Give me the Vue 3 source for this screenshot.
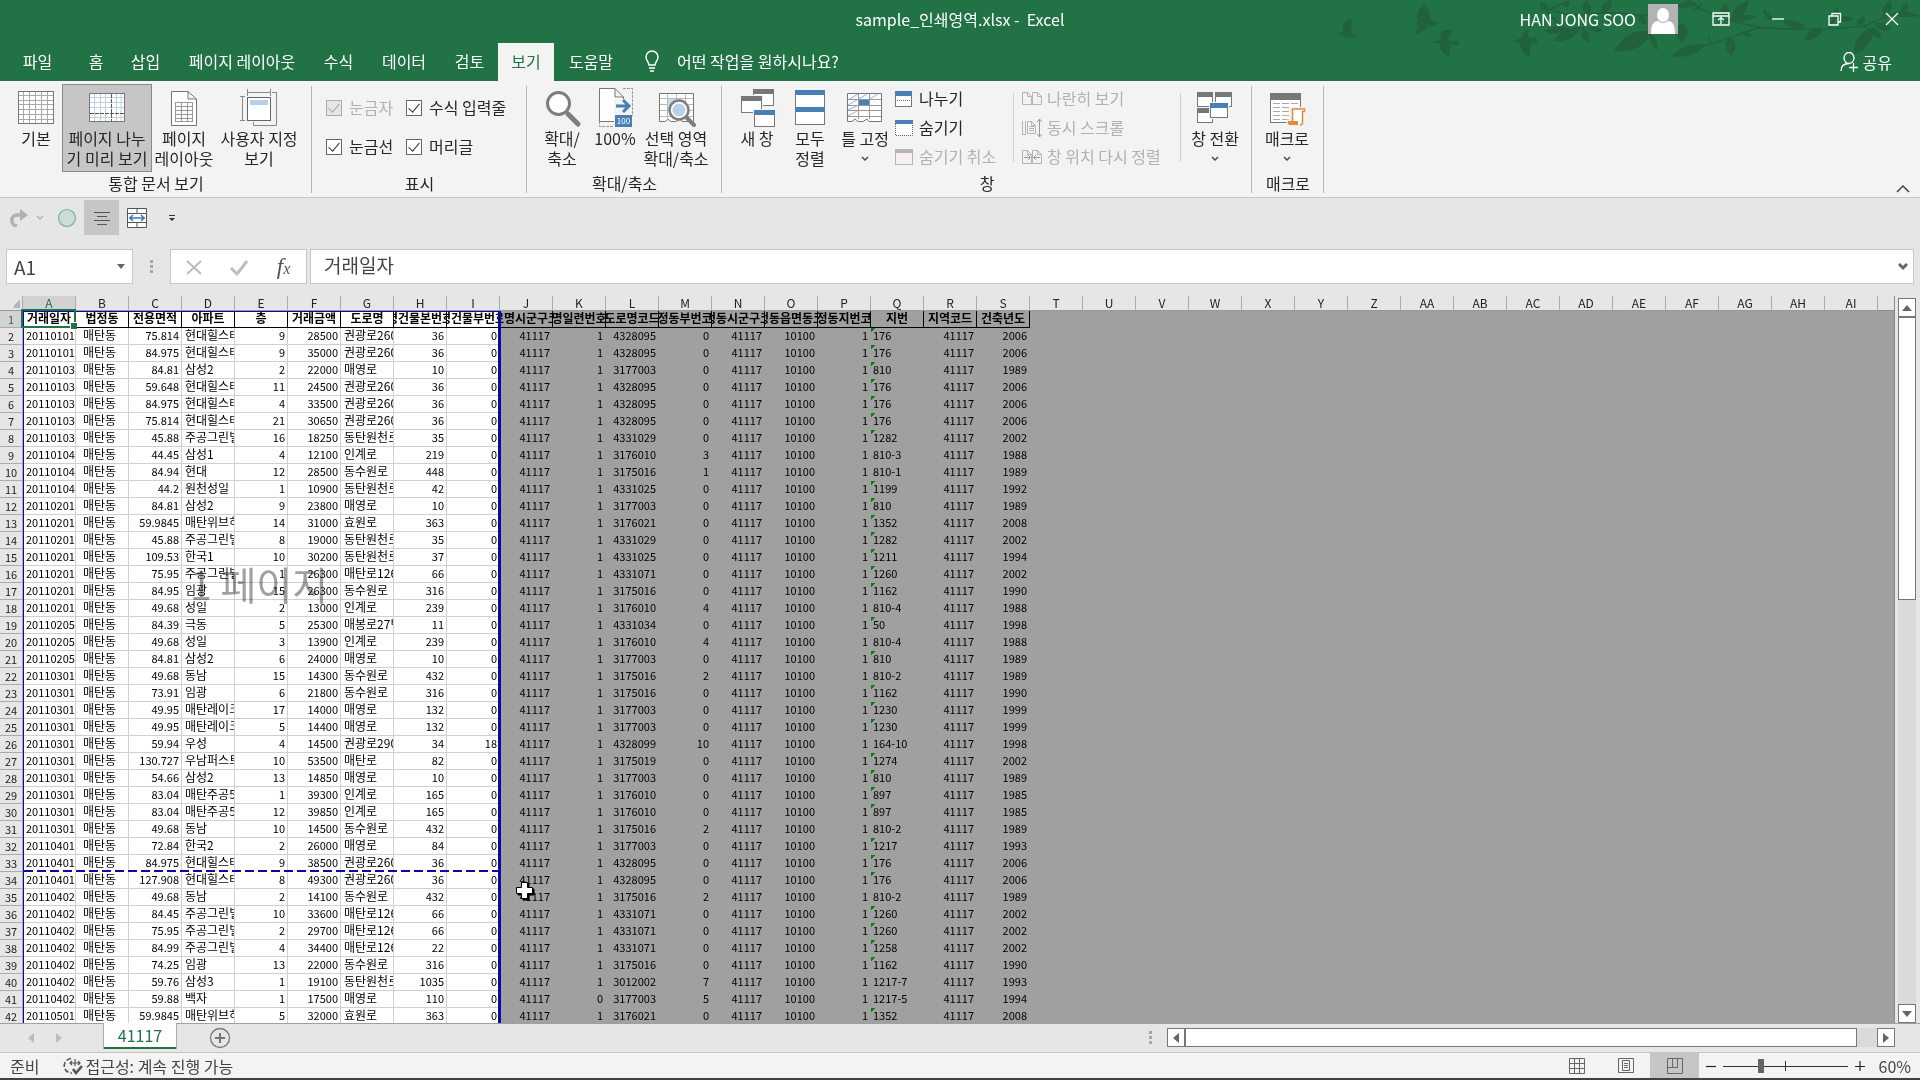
<template>
  <div class="excel">
    <header class="title">
      <svg class="title__art" viewBox="0 0 1568 270" preserveAspectRatio="none" aria-hidden="true">
        <g fill="#21623d">
          <path v-for="(bird, i) in birds" :key="`b${i}`" :d="bird" />
          <path v-for="(leaf, i) in leaves" :key="`l${i}`" :d="leafPath(leaf)" />
        </g>
        <g fill="none" stroke="#21623d" stroke-width="5">
          <path d="M575,30 C600,15 640,60 700,42 C780,30 830,52 880,45 M590,32 L640,88 L690,84 M600,28 L650,4" />
          <path d="M960,0 L1000,30 L1060,60 L1150,82 C1250,92 1350,88 1420,78 L1500,42 L1568,48" />
          <path d="M1150,82 C1090,100 1040,132 990,140 M1015,110 L1024,136 M975,36 L1000,10" />
          <path d="M1420,78 L1440,92 M1330,84 L1350,48 M1470,56 L1490,14" />
        </g>
      </svg>
      <div class="title__bar">
        <span class="title__name">sample_인쇄영역.xlsx&nbsp;-&nbsp;&nbsp;Excel</span>
        <div class="title__right">
          <span>HAN JONG SOO</span>
          <svg class="avatar" viewBox="0 0 30 30" aria-hidden="true">
            <rect width="30" height="30" fill="#b3b3b3" />
            <ellipse cx="15" cy="11" rx="6" ry="7" fill="#fff" />
            <path d="M3,30 C3,20 6,17 10,17 Q15,21 20,17 C24,17 27,20 27,30 Z" fill="#fff" />
          </svg>
          <button v-for="b in windowButtons" :key="b.label" type="button" class="title__btn" :aria-label="b.label">
            <svg viewBox="0 0 18 18" v-html="b.icon" />
          </button>
        </div>
      </div>
      <nav class="tabs">
        <div class="tabs__list">
          <button
            v-for="tab in tabs"
            :key="tab"
            type="button"
            class="tabs__tab"
            :class="{ 'is-active': tab === activeTab }"
            @click="activeTab = tab"
          >{{ tab }}</button>
        </div>
        <button type="button" class="tabs__tell">
          <svg viewBox="0 0 16 22" fill="none" stroke="#fff" stroke-width="1.5" aria-hidden="true">
            <path d="M5,15 C5,12 2,11 2,7 A6,6 0 0 1 14,7 C14,11 11,12 11,15 Z M5,18 H11 M6,21 H10" />
          </svg>
          <span>어떤 작업을 원하시나요?</span>
        </button>
        <button type="button" class="tabs__share">
          <svg viewBox="0 0 19 20" fill="none" stroke="#fff" stroke-width="1.3" aria-hidden="true">
            <ellipse cx="9" cy="6" rx="5" ry="5.5" />
            <path d="M1,19 C1,14 4,11.500 9,11.500 M9,15.500 H18 M13.500,11 V20" />
          </svg>
          <span>공유</span>
        </button>
      </nav>
    </header>

    <section class="ribbon" aria-label="보기">
      <div class="group group--views">
        <div class="group__body">
          <button v-for="b in viewButtons" :key="b.label" type="button" class="big" :class="[b.cls, { 'is-on': b.on }]">
            <svg viewBox="0 0 40 40" v-html="b.icon" />
            <span>{{ b.label }}</span>
          </button>
        </div>
        <div class="group__label">통합 문서 보기</div>
      </div>
      <div class="group group--show">
        <div class="group__body checks">
          <label v-for="c in checks" :key="c.label" class="check" :class="{ 'is-disabled': c.disabled }">
            <input type="checkbox" checked :disabled="c.disabled" />
            <span>{{ c.label }}</span>
          </label>
        </div>
        <div class="group__label">표시</div>
      </div>
      <div class="group group--zoom">
        <div class="group__body">
          <button v-for="b in zoomButtons" :key="b.label" type="button" class="big" :class="b.cls">
            <svg viewBox="0 0 40 40" v-html="b.icon" />
            <span>{{ b.label }}</span>
          </button>
        </div>
        <div class="group__label">확대/축소</div>
      </div>
      <div class="group group--window">
        <div class="group__body">
          <button v-for="b in windowTools" :key="b.label" type="button" class="big" :class="b.cls">
            <svg viewBox="0 0 40 40" v-html="b.icon" />
            <span>{{ b.label }}</span>
            <svg v-if="b.menu" class="big__arrow" viewBox="0 0 8 6"><path d="M1,1 L4,4 L7,1" fill="none" stroke="#444" stroke-width="1.4" /></svg>
          </button>
          <div class="stack stack--first">
            <button v-for="s in smallLeft" :key="s.label" type="button" class="small" :disabled="s.disabled">
              <svg viewBox="0 0 20 20" v-html="s.icon" />
              <span>{{ s.label }}</span>
            </button>
          </div>
          <div class="stack stack--second">
            <button v-for="s in smallRight" :key="s.label" type="button" class="small" disabled>
              <svg viewBox="0 0 20 20" v-html="s.icon" />
              <span>{{ s.label }}</span>
            </button>
          </div>
          <button type="button" class="big w-68">
            <svg viewBox="0 0 40 40" v-html="icons.switchWin" />
            <span>창 전환</span>
            <svg class="big__arrow" viewBox="0 0 8 6"><path d="M1,1 L4,4 L7,1" fill="none" stroke="#444" stroke-width="1.4" /></svg>
          </button>
        </div>
        <div class="group__label">창</div>
      </div>
      <div class="group group--macro">
        <div class="group__body">
          <button type="button" class="big w-70">
            <svg viewBox="0 0 40 40" v-html="icons.macro" />
            <span>매크로</span>
            <svg class="big__arrow" viewBox="0 0 8 6"><path d="M1,1 L4,4 L7,1" fill="none" stroke="#444" stroke-width="1.4" /></svg>
          </button>
        </div>
        <div class="group__label">매크로</div>
      </div>
      <button type="button" class="ribbon__collapse" aria-label="리본 메뉴 축소">
        <svg viewBox="0 0 14 8"><path d="M1,7 L7,1 L13,7" fill="none" stroke="#444" stroke-width="1.5" /></svg>
      </button>
    </section>

    <div class="quick">
      <button type="button" class="quick__redo" aria-label="다시 실행">
        <svg viewBox="0 0 20 18"><path d="M8,17 C1,16 1,6 8,6 H14" fill="none" stroke="#b1b1b1" stroke-width="3.500" /><path d="M11,0 L19,6 L11,12 Z" fill="#b1b1b1" /></svg>
      </button>
      <button type="button" class="quick__more" aria-label="다시 실행 목록">
        <svg viewBox="0 0 8 6"><path d="M1,1 L4,4 L7,1" fill="none" stroke="#b1b1b1" stroke-width="1.4" /></svg>
      </button>
      <button type="button" class="quick__btn" aria-label="타원">
        <svg viewBox="0 0 20 20"><circle cx="10" cy="10" r="8.500" fill="#cbded6" stroke="#7fae9a" stroke-width="1.2" /></svg>
      </button>
      <button type="button" class="quick__btn is-on" aria-label="가운데 맞춤">
        <svg viewBox="0 0 20 20"><path d="M2,4.500 H18 M5,8.500 H15 M2,12.500 H18 M5,16.500 H15" stroke="#555" /></svg>
      </button>
      <button type="button" class="quick__btn" aria-label="병합하고 가운데 맞춤">
        <svg viewBox="0 0 20 20">
          <path d="M0.500,0.500 H19.500 V19.500 H0.500 Z M0.500,5.500 H19.500 M0.500,14.500 H19.500 M10,0.500 V5.500 M10,14.500 V19.500" fill="#fff" stroke="#555" />
          <path d="M2,10 H18 M6,7 L3,10 L6,13 M14,7 L17,10 L14,13" fill="none" stroke="#3f7ab8" stroke-width="1.6" />
        </svg>
      </button>
      <button type="button" class="quick__btn" aria-label="빠른 실행 도구 모음 사용자 지정">
        <svg viewBox="0 0 20 20"><path d="M7,7.500 H13" stroke="#333" /><path d="M7,10 H13 L10,13 Z" fill="#333" /></svg>
      </button>
    </div>

    <div class="formula">
      <div class="formula__name">
        <input v-model="cellName" type="text" aria-label="이름 상자" />
        <svg viewBox="0 0 8 6" aria-hidden="true"><path d="M0,0 H8 L4,5 Z" fill="#666" /></svg>
      </div>
      <span class="dots" aria-hidden="true"></span>
      <div class="formula__tools">
        <button type="button" aria-label="취소"><svg viewBox="0 0 20 20"><path d="M3,4 L17,17 M17,4 L3,17" stroke="#bdbdbd" stroke-width="2" /></svg></button>
        <button type="button" aria-label="입력"><svg viewBox="0 0 20 20"><path d="M2,11 L8,17 L18,4" fill="none" stroke="#bdbdbd" stroke-width="3" /></svg></button>
        <button type="button" class="formula__fx" aria-label="함수 삽입"><span>f<sub>x</sub></span></button>
      </div>
      <div class="formula__text">
        <input v-model="cellValue" type="text" aria-label="수식 입력줄" />
        <svg viewBox="0 0 10 8" aria-hidden="true"><path d="M1,1 L5,5 L9,1" fill="none" stroke="#666" stroke-width="3" /></svg>
      </div>
    </div>

    <main class="work">
      <div class="sheet">
        <table class="grid">
          <colgroup>
            <col class="grid__rowcol" />
            <col v-for="c in columns" :key="c" class="grid__col" />
          </colgroup>
          <thead>
            <tr>
              <th class="corner" aria-label="모두 선택"></th>
              <th v-for="c in columns" :key="c" scope="col" :class="{ 'is-current': c === 'A' }">{{ c }}</th>
            </tr>
          </thead>
          <tbody>
            <tr class="fields">
              <th scope="row" class="is-current">1</th>
              <td v-for="(f, i) in fields" :key="f" :class="{ out: i > 8, 'is-selected': i === 0 }">
                <div><span>{{ f }}</span></div>
              </td>
            </tr>
            <tr v-for="(row, r) in rows" :key="r">
              <th scope="row">{{ r + 2 }}</th>
              <td v-for="(v, i) in row" :key="i" :class="cellClass(i, v)"><div>{{ v }}</div></td>
            </tr>
          </tbody>
        </table>
        <div class="area" aria-hidden="true"></div>
        <div class="break" aria-hidden="true"></div>
        <div class="mark">1 페이지</div>
        <svg class="cursor" viewBox="0 0 20 20" aria-hidden="true">
          <path d="M8,3 H14 V8 H19 V14 H14 V19 H8 V14 H3 V8 H8 Z" fill="#000" stroke="#000" />
          <path d="M6.500,1.500 H12.500 V6.500 H17.500 V12.500 H12.500 V17.500 H6.500 V12.500 H1.500 V6.500 H6.500 Z" fill="#fff" stroke="#000" />
        </svg>
      </div>
      <div class="vbar">
        <button type="button" aria-label="위로"><svg viewBox="0 0 10 8"><path d="M0,7 H10 L5,1 Z" fill="#666" /></svg></button>
        <div class="vbar__thumb"></div>
        <div class="vbar__track"></div>
        <button type="button" aria-label="아래로"><svg viewBox="0 0 10 8"><path d="M0,1 H10 L5,7 Z" fill="#666" /></svg></button>
      </div>
    </main>

    <div class="sheets">
      <div class="sheets__tabs">
        <button type="button" class="sheets__nav" aria-label="이전 시트"><svg viewBox="0 0 6 10"><path d="M6,0 V10 L0,5 Z" fill="#bcbcbc" /></svg></button>
        <button type="button" class="sheets__nav" aria-label="다음 시트"><svg viewBox="0 0 6 10"><path d="M0,0 V10 L6,5 Z" fill="#bcbcbc" /></svg></button>
        <button type="button" class="sheets__tab">41117</button>
        <button type="button" class="sheets__add" aria-label="새 시트">
          <svg viewBox="0 0 22 22" fill="none" stroke="#777"><circle cx="11" cy="11" r="9.500" stroke-width="1.3" /><path d="M6,11 H16 M11,6 V16" stroke-width="2" /></svg>
        </button>
      </div>
      <span class="dots" aria-hidden="true"></span>
      <div class="hbar">
        <button type="button" aria-label="왼쪽"><svg viewBox="0 0 8 10"><path d="M7,0 V10 L1,5 Z" fill="#666" /></svg></button>
        <div class="hbar__thumb"></div>
        <div class="hbar__track"></div>
        <button type="button" aria-label="오른쪽"><svg viewBox="0 0 8 10"><path d="M1,0 V10 L7,5 Z" fill="#666" /></svg></button>
      </div>
    </div>

    <footer class="status">
      <span class="status__ready">준비</span>
      <button type="button" class="status__access">
        <svg viewBox="0 0 20 18" fill="none" stroke="#555">
          <path d="M8,1.500 A7,7 0 1 0 9,16" stroke-width="1.6" stroke-dasharray="5 2" />
          <path d="M7,6 H17 M9,4 L7,6 L9,8 M15,4 L17,6 L15,8 M12,2 V9" stroke-width="1.2" />
          <path d="M10,12 L13,16 L19,9" stroke-width="2.600" />
        </svg>
        <span>접근성: 계속 진행 가능</span>
      </button>
      <div class="status__right">
        <button v-for="m in modes" :key="m.label" type="button" class="status__mode" :class="{ 'is-on': m.on }" :aria-label="m.label">
          <svg viewBox="0 0 18 18" fill="none" stroke="#666" v-html="m.icon" />
        </button>
        <button type="button" class="status__step" aria-label="축소">
          <svg viewBox="0 0 10 10"><path d="M0,5.500 H10" stroke="#222" stroke-width="1.2" /></svg>
        </button>
        <input v-model="zoom" type="range" min="0" max="100" aria-label="확대/축소" />
        <button type="button" class="status__step" aria-label="확대">
          <svg viewBox="0 0 10 10"><path d="M0,5.500 H10 M5,0 V10" stroke="#222" stroke-width="1.2" /></svg>
        </button>
        <span class="status__zoom">60%</span>
      </div>
    </footer>
  </div>
</template>

<script setup>
import { ref } from 'vue'

const activeTab = ref('보기')
const cellName = ref('A1')
const cellValue = ref('거래일자')
const zoom = ref(29)

const tabs = ['파일', '홈', '삽입', '페이지 레이아웃', '수식', '데이터', '검토', '보기', '도움말']

const line = (d, stroke = '#777', extra = '') => `<path d="${d}" fill="none" stroke="${stroke}" ${extra}/>`
const box = (x, y, w, h, stroke = '#777', fill = '#fff') =>
  `<rect x="${x + 0.5}" y="${y + 0.5}" width="${w - 1}" height="${h - 1}" fill="${fill}" stroke="${stroke}"/>`
const bar = (x, y, w, h, fill) => `<rect x="${x}" y="${y}" width="${w}" height="${h}" fill="${fill}"/>`
const win = (x, y, w, h, color, edge = '#777') => box(x, y, w, h, edge) + bar(x, y, w, 5, color)
const halo = (x, y, w, h) => bar(x - 1, y - 1, w + 2, h + 2, '#f3f3f3')
const page = (x, y, w, h, stroke) =>
  `<path d="M${x + 0.5},${y + 0.5} h${w - 5} l4,4 v${h - 5} h-${w - 1} Z M${x + w - 4.5},${y + 0.5} v4 h4" fill="#f6eff6" stroke="${stroke}"/>`

const BLUE = '#4a7fb5'
const DIM = '#b5b5b5'

const icons = {
  normal: box(2, 3, 36, 33, '#777') +
    line('M7.500,4 V35 M13.500,4 V35 M19.500,4 V35 M25.500,4 V35 M31.500,4 V35 M3,7.500 H37 M3,12.500 H37 M3,16.500 H37 M3,21.500 H37 M3,26.500 H37 M3,31.500 H37', '#aaa'),
  pageBreak: box(2, 5, 36, 29, '#777') +
    line('M7.500,6 V33 M13.500,6 V33 M18.500,6 V33 M29.500,6 V33 M34,6 V33 M3,9.500 H37 M3,14.500 H37 M3,19.500 H37 M3,29.500 H37', '#bcd0e2') +
    line('M24.500,6 V33 M3,25.500 H37', '#555', 'stroke-dasharray="4 1"'),
  pageLayout: '<path d="M7.500,3.500 H24 L32.500,11 V37.500 H7.500 Z M24,3.500 V11 H32.500" fill="#fff" stroke="#777"/>' +
    box(11, 14, 18, 20, '#999') + line('M17.500,14 V33 M23.500,14 V33 M11,18.500 H29 M11,22.500 H29 M11,26.500 H29 M11,30.500 H29', '#999'),
  custom: line('M37.500,4.500 H33 M37.500,4 V37.500 H14.500 V34', '#888') + line('M8,4.500 H31 M8.500,1 V8 M31.500,1 V8 M3.500,9 V32 M1,8.500 H6 M1,32.500 H6', '#888') +
    box(8, 9, 24, 24, '#666') + bar(11, 12, 18, 5, '#b9cfe6'),
  glass: '<path d="M26,26 L36,36" stroke="#7d7d7d" stroke-width="5" stroke-linecap="round"/><circle cx="16.500" cy="15.500" r="11" fill="#fff" stroke="#7d7d7d" stroke-width="3"/>',
  hundred: line('M28,0.500 H37.500 V28 M4.500,33 V38.500 H20', '#999', 'stroke-dasharray="3 1"') +
    '<path d="M4.500,0.500 H20 L28.500,9 V33.500 H4.500 Z M20,0.500 V9 H28.500" fill="#fff" stroke="#777"/>' +
    bar(19, 11, 18, 28, '#f3f3f3') + '<path d="M21,18 H34 M28,12 L34,18 L28,24" fill="none" stroke="#4a7fb5" stroke-width="3"/>' +
    bar(20, 27, 17, 12, BLUE) + '<text x="28.500" y="36" font-size="8" fill="#fff" text-anchor="middle">100</text>',
  zoomSel: '<path d="M3.500,5.500 H37.500 V33.500 H26 L24,31 L20,33.500 H15 L12,31 L9,33.500 H3.500 Z" fill="#fff" stroke="#777"/>' +
    line('M11.500,6 V33 M20.500,6 V30 M29.500,6 V30 M4,10.500 H37 M4,16.500 H37 M4,22.500 H37 M4,28.500 H37', '#bbb') + bar(12, 11, 13, 10, '#c7daee') +
    '<path d="M31,30 L38,37" stroke="#7d7d7d" stroke-width="4" stroke-linecap="round"/><circle cx="23" cy="22" r="9.500" fill="#fff" stroke="#7d7d7d" stroke-width="2.500"/><circle cx="23" cy="22" r="6.500" fill="#b9d0e8"/>',
  newWin: win(16, 1, 21, 17, '#777') + halo(4, 8, 21, 17) + win(4, 8, 21, 17, '#777') + halo(17, 22, 21, 17) + win(17, 22, 21, 17, BLUE),
  arrange: win(5, 2, 30, 18, BLUE) + win(5, 19, 30, 18, BLUE),
  freeze: '<path d="M2.500,5.500 H36.500 V33.500 H24 L22,31 L18,33.500 H13 L10,31 L7,33.500 H2.500 Z" fill="#fff" stroke="#777"/>' +
    line('M13.500,6 V31 M24.500,6 V31 M3,11.500 H36 M3,17.500 H36 M3,22.500 H36 M3,28.500 H36', '#999') + bar(14, 12, 10, 5, BLUE) +
    line('M3,12 L13,6 M14,11 L22,6 M25,11 L33,6 M3,17 L12,12 M3,22 L12,18 M3,28 L12,23', '#8fb2d8'),
  switchWin: win(2, 4, 16, 15, '#777') + win(20, 4, 17, 15, '#777') + win(2, 20, 16, 15, '#777') + halo(15, 15, 18, 15) + win(15, 15, 18, 15, BLUE),
  macro: box(3, 5, 31, 30, '#777') + bar(3, 5, 31, 7, '#777') +
    line('M6,15.500 H31 M6,19.500 H31 M6,23.500 H31 M6,27.500 H31 M6,31.500 H31', '#aaa', 'stroke-dasharray="7 2"') +
    '<path d="M24,20.500 H38 V24 H36 V34 Q36,37 33,37 H23 Q20,37 21,33 H24 Z" fill="#fff" stroke="#f3f3f3" stroke-width="3"/>' +
    '<path d="M25.500,33 V21 H37.500 V23.500 H35.500 V34 Q35.500,37 33,37" fill="#fff" stroke="#e08a3c" stroke-width="1.500"/><path d="M21,33 H31 V37 H23 Q20,37 21,33" fill="#e08a3c"/>',
}

const windowButtons = [
  { label: '리본 메뉴 표시 옵션', icon: '<path d="M1,3 H17 V15 H1 Z M1,6 H17 M9,14 V8 M6,10 L9,7.500 L12,10" fill="none" stroke="#fff" stroke-width="1.300"/>' },
  { label: '최소화', icon: '<path d="M3,9 H15" stroke="#fff" stroke-width="1.300"/>' },
  { label: '이전 크기로 복원', icon: '<path d="M3,6 H12 V15 H3 Z M6,6 V3.500 H14.500 V12 H12" fill="none" stroke="#fff" stroke-width="1.300"/>' },
  { label: '닫기', icon: '<path d="M3,3 L15,15 M15,3 L3,15" stroke="#fff" stroke-width="1.300"/>' },
]

const viewButtons = [
  { label: '기본', cls: 'w-52', icon: icons.normal },
  { label: '페이지 나누\n기 미리 보기', cls: 'w-90', icon: icons.pageBreak, on: true },
  { label: '페이지\n레이아웃', cls: 'w-64', icon: icons.pageLayout },
  { label: '사용자 지정\n보기', cls: 'w-86', icon: icons.custom },
]

const checks = [
  { label: '눈금자', disabled: true },
  { label: '수식 입력줄' },
  { label: '눈금선' },
  { label: '머리글' },
]

const zoomButtons = [
  { label: '확대/\n축소', cls: 'w-64', icon: icons.glass },
  { label: '100%', cls: 'w-42', icon: icons.hundred },
  { label: '선택 영역\n확대/축소', cls: 'w-80', icon: icons.zoomSel },
]

const windowTools = [
  { label: '새 창', cls: 'w-54', icon: icons.newWin },
  { label: '모두\n정렬', cls: 'w-52', icon: icons.arrange },
  { label: '틀 고정', cls: 'w-58', icon: icons.freeze, menu: true },
]

const smallLeft = [
  { label: '나누기', icon: box(1, 2, 17, 16) + bar(1, 2, 17, 5, BLUE) + line('M3,11.500 H17', BLUE, 'stroke-dasharray="1 1"') },
  { label: '숨기기', icon: bar(1, 2, 17, 15, '#fff') + bar(1, 2, 18, 4, BLUE) + line('M1.500,6 V17.500 H18.500 V6', '#666', 'stroke-dasharray="1 1"') },
  { label: '숨기기 취소', icon: box(1, 2, 18, 16, DIM, '#f6eff6') + bar(1, 2, 18, 4, DIM), disabled: true },
]

const smallRight = [
  { label: '나란히 보기', icon: page(0, 3, 10, 13, DIM) + page(10, 3, 10, 13, DIM) },
  { label: '동시 스크롤', icon: line('M0.500,3 V16.500 H4 M3.500,3 V16', DIM) + page(5, 3, 9, 13, DIM) + line('M7,8.500 H12 M7,10.500 H12 M7,12.500 H12', DIM) + line('M17.500,1 V19 M15,4 L17.500,1 L20,4 M15,16 L17.500,19 L20,16', '#999') },
  { label: '창 위치 다시 정렬', icon: page(0, 3, 10, 14, DIM) + page(10, 3, 10, 14, DIM) + line('M2,10.500 H8 M6,8 L8.500,10.500 L6,13 M18,10.500 H12 M14,8 L11.500,10.500 L14,13', '#999') },
]

const modes = [
  { label: '기본', icon: '<path d="M1.500,1.500 H16.500 V16.500 H1.500 Z M6.500,1.500 V16.500 M11.500,1.500 V16.500 M1.500,6.500 H16.500 M1.500,11.500 H16.500"/>' },
  { label: '페이지 레이아웃', icon: '<path d="M1.500,1.500 H16.500 V15.500 H1.500 Z M5.500,3.500 H12.500 V13.500 H5.500 Z M7,6.500 H11 M7,8.500 H11 M7,10.500 H11"/>' },
  { label: '페이지 나누기 미리 보기', icon: '<path d="M1.500,1.500 H16.500 V16.500 H1.500 Z M6.500,1.500 V10.500 M11.500,1.500 V10.500 H1.500"/>', on: true },
]

const birds = [
  'M83,52 C60,62 55,82 62,98 L44,98 L62,108 L68,117 L78,110 L97,114 L95,106 L82,100 Z',
  'M272,12 C252,30 250,55 258,64 C244,66 246,74 258,76 L248,100 C262,102 276,92 282,78 L302,76 L313,68 L298,62 L288,58 C290,40 284,20 272,12 Z',
  'M348,90 C318,86 306,98 318,114 L296,128 L314,130 C310,148 322,164 340,170 C336,156 338,146 346,136 L362,136 L362,122 L340,124 L336,110 Z',
  'M545,90 C530,92 526,100 530,112 L506,122 L524,130 C522,150 534,166 546,170 C552,156 548,140 552,130 L568,132 L566,112 L548,114 L543,102 Z',
]

// base x, base y, tip x, tip y, width
const leaves = [
  [865, 95, 768, 154, 44], [862, 98, 882, 152, 16], [945, 68, 945, 128, 32], [1004, 136, 918, 169, 30],
  [1070, 108, 1076, 170, 26], [1100, 96, 1130, 108, 12], [1055, 56, 1060, 8, 22], [1075, 62, 1120, 0, 26],
  [1072, 60, 1142, 48, 18], [1180, 60, 1158, 28, 14], [1270, 82, 1206, 62, 22], [1312, 84, 1265, 122, 26],
  [1345, 58, 1352, 24, 20], [1350, 58, 1396, 56, 16], [1442, 84, 1396, 164, 34], [1440, 80, 1466, 118, 18],
  [1450, 72, 1496, 88, 22], [1474, 46, 1492, 0, 20], [1500, 40, 1558, 46, 18], [1404, 80, 1424, 46, 18],
  [596, 30, 574, 6, 16], [640, 24, 652, 0, 14], [700, 42, 694, 0, 22], [736, 38, 762, 0, 22],
  [646, 88, 584, 94, 22], [676, 88, 610, 124, 28], [688, 86, 700, 128, 20], [836, 44, 850, 76, 18],
  [985, 10, 926, 18, 18], [700, 84, 742, 92, 14], [1520, 42, 1536, 8, 16],
]

function leafPath([x1, y1, x2, y2, w]) {
  const len = Math.hypot(x2 - x1, y2 - y1)
  const nx = (-(y2 - y1) / len) * w
  const ny = ((x2 - x1) / len) * w
  const mx = x1 + (x2 - x1) * 0.4
  const my = y1 + (y2 - y1) * 0.4
  return `M${x1},${y1} Q${mx + nx},${my + ny} ${x2},${y2} Q${mx - nx},${my - ny} ${x1},${y1} Z`
}

const letters = [...'ABCDEFGHIJKLMNOPQRSTUVWXYZ']
const columns = [...letters, ...letters.slice(0, 9).map((c) => `A${c}`)]

const fields = [
  '거래일자', '법정동', '전용면적', '아파트', '층', '거래금액', '도로명', '도로명건물본번호코드', '도로명건물부번호코드',
  '도로명시군구코드', '도로명일련번호코드', '도로명코드', '법정동부번코드', '법정동시군구코드', '법정동읍면동코드',
  '법정동지번코드', '지번', '지역코드', '건축년도',
]

// date, area, apartment, floor, price, road, main no., sub no., serial, road code, sub lot, lot, year
const deals = `
20110101|75.814|현대힐스테이트|9|28500|권광로260번길|36|0|1|4328095|0|176|2006
20110101|84.975|현대힐스테이트|9|35000|권광로260번길|36|0|1|4328095|0|176|2006
20110103|84.81|삼성2|2|22000|매영로|10|0|1|3177003|0|810|1989
20110103|59.648|현대힐스테이트|11|24500|권광로260번길|36|0|1|4328095|0|176|2006
20110103|84.975|현대힐스테이트|4|33500|권광로260번길|36|0|1|4328095|0|176|2006
20110103|75.814|현대힐스테이트|21|30650|권광로260번길|36|0|1|4328095|0|176|2006
20110103|45.88|주공그린빌|16|18250|동탄원천로|35|0|1|4331029|0|1282|2002
20110104|44.45|삼성1|4|12100|인계로|219|0|1|3176010|3|810-3|1988
20110104|84.94|현대|12|28500|동수원로|448|0|1|3175016|1|810-1|1989
20110104|44.2|원천성일|1|10900|동탄원천로|42|0|1|4331025|0|1199|1992
20110201|84.81|삼성2|9|23800|매영로|10|0|1|3177003|0|810|1989
20110201|59.9845|매탄위브하늘채|14|31000|효원로|363|0|1|3176021|0|1352|2008
20110201|45.88|주공그린빌|8|19000|동탄원천로|35|0|1|4331029|0|1282|2002
20110201|109.53|한국1|10|30200|동탄원천로|37|0|1|4331025|0|1211|1994
20110201|75.95|주공그린빌|1|26300|매탄로126번길|66|0|1|4331071|0|1260|2002
20110201|84.95|임광|15|26300|동수원로|316|0|1|3175016|0|1162|1990
20110201|49.68|성일|2|13000|인계로|239|0|1|3176010|4|810-4|1988
20110205|84.39|극동|5|25300|매봉로27번길|11|0|1|4331034|0|50|1998
20110205|49.68|성일|3|13900|인계로|239|0|1|3176010|4|810-4|1988
20110205|84.81|삼성2|6|24000|매영로|10|0|1|3177003|0|810|1989
20110301|49.68|동남|15|14300|동수원로|432|0|1|3175016|2|810-2|1989
20110301|73.91|임광|6|21800|동수원로|316|0|1|3175016|0|1162|1990
20110301|49.95|매탄레이크|17|14000|매영로|132|0|1|3177003|0|1230|1999
20110301|49.95|매탄레이크|5|14400|매영로|132|0|1|3177003|0|1230|1999
20110301|59.94|우성|4|14500|권광로290번길|34|18|1|4328099|10|164-10|1998
20110301|130.727|우남퍼스트빌|10|53500|매탄로|82|0|1|3175019|0|1274|2002
20110301|54.66|삼성2|13|14850|매영로|10|0|1|3177003|0|810|1989
20110301|83.04|매탄주공5|1|39300|인계로|165|0|1|3176010|0|897|1985
20110301|83.04|매탄주공5|12|39850|인계로|165|0|1|3176010|0|897|1985
20110301|49.68|동남|10|14500|동수원로|432|0|1|3175016|2|810-2|1989
20110401|72.84|한국2|2|26000|매영로|84|0|1|3177003|0|1217|1993
20110401|84.975|현대힐스테이트|9|38500|권광로260번길|36|0|1|4328095|0|176|2006
20110401|127.908|현대힐스테이트|8|49300|권광로260번길|36|0|1|4328095|0|176|2006
20110402|49.68|동남|2|14100|동수원로|432|0|1|3175016|2|810-2|1989
20110402|84.45|주공그린빌|10|33600|매탄로126번길|66|0|1|4331071|0|1260|2002
20110402|75.95|주공그린빌|2|29700|매탄로126번길|66|0|1|4331071|0|1260|2002
20110402|84.99|주공그린빌|4|34400|매탄로126번길|22|0|1|4331071|0|1258|2002
20110402|74.25|임광|13|22000|동수원로|316|0|1|3175016|0|1162|1990
20110402|59.76|삼성3|1|19100|동탄원천로|1035|0|1|3012002|7|1217-7|1993
20110402|59.88|백자|1|17500|매영로|110|0|0|3177003|5|1217-5|1994
20110501|59.9845|매탄위브하늘채|5|32000|효원로|363|0|1|3176021|0|1352|2008`

const rows = deals.trim().split('\n').map((text) => {
  const [date, area, apt, floor, price, road, main, sub, serial, code, subLot, lot, year] = text.split('|')
  return [
    date, '매탄동', area, apt, floor, price, road, main, sub, '41117', serial, code, subLot, '41117', '10100', '1', lot, '41117', year,
  ]
})

function cellClass(i, v) {
  return {
    out: i > 8,
    ko: i === 1 || i === 3 || i === 6,
    dong: i === 1,
    lot: i === 16,
    'is-flagged': i === 16 && !v.includes('-'),
  }
}
</script>

<style>
body {
  margin: 0;
}
</style>

<style scoped>
.excel {
  display: flex;
  flex-direction: column;
  height: 100vh;
  overflow: hidden;
  background: #e6e6e6;
  color: #262626;
  font-family: "Noto Sans CJK KR", "Noto Sans", sans-serif;
  font-size: 16px;
  line-height: 20px;
}

.excel * {
  box-sizing: border-box;
}

button {
  margin: 0;
  padding: 0;
  border: none;
  background: none;
  color: inherit;
  font: inherit;
}

svg {
  display: block;
  flex: none;
}

/* title and tabs */
.title {
  position: relative;
  flex: none;
  background: #217346;
  color: #fff;
}

.title__art {
  position: absolute;
  top: 0;
  right: 0;
  width: 600px;
  height: 90px;
  clip-path: inset(0 0 9px 0);
}

.title__bar {
  position: relative;
  display: grid;
  grid-template-columns: 1fr auto 1fr;
  align-items: center;
  height: 38px;
}

.title__name {
  grid-column: 2;
}

.title__right {
  display: flex;
  align-items: center;
  justify-content: flex-end;
}

.avatar {
  width: 30px;
  height: 30px;
  margin: 0 14px 0 12px;
}

.title__btn {
  display: grid;
  place-items: center;
  width: 57px;
  height: 38px;
}

.title__btn svg {
  width: 18px;
  height: 18px;
}

.tabs {
  position: relative;
  display: flex;
  align-items: center;
  height: 43px;
  padding-top: 5px;
}

.tabs__list {
  display: grid;
  grid-template-columns: 75px 42px 57px 136px 57px 74px 57px 56px 74px;
  height: 38px;
}

.tabs__tab {
  padding-bottom: 3px;
}

.tabs__tab.is-active {
  background: #f3f3f3;
  color: #217346;
}

.tabs__tell,
.tabs__share {
  display: flex;
  align-items: center;
  padding-bottom: 2px;
}

.tabs__tell {
  gap: 17px;
  margin-left: 16px;
}

.tabs__tell svg {
  width: 16px;
  height: 22px;
}

.tabs__share {
  gap: 4px;
  margin-left: auto;
  padding-right: 28px;
  padding-bottom: 0;
}

.tabs__share svg {
  width: 19px;
  height: 20px;
}

/* ribbon */
.ribbon {
  position: relative;
  display: flex;
  flex: none;
  height: 117px;
  padding: 3px 0 4px;
  border-bottom: 1px solid #c8c8c8;
  background: #f3f3f3;
}

.group {
  position: relative;
  display: flex;
  flex-direction: column;
}

.group::after {
  content: "";
  position: absolute;
  top: 2px;
  right: 0;
  bottom: 0;
  width: 1px;
  background: #b5b5b5;
}

.group--views {
  width: 312px;
}

.group--views .group__body {
  padding-left: 10px;
}

.group--show {
  width: 215px;
}

.group--zoom {
  width: 195px;
}

.group--zoom .group__body {
  padding-left: 3px;
}

.group--window {
  width: 530px;
}

.group--window .group__body {
  padding-left: 8px;
}

.group--macro {
  width: 72px;
}

.group__body {
  display: flex;
  align-items: flex-start;
  height: 92px;
}

.group__label {
  text-align: center;
}

.big {
  display: flex;
  flex-direction: column;
  align-items: center;
  height: 88px;
  padding-top: 3px;
  border: 1px solid transparent;
  white-space: pre;
}

.big > svg {
  width: 40px;
  height: 40px;
}

.big > .big__arrow {
  width: 8px;
  height: 6px;
  margin-top: 8px;
}

.big.is-on {
  border-color: #8a8a8a;
  background: #c6c6c6;
}

.w-42 {
  width: 42px;
}

.w-52 {
  width: 52px;
}

.w-54 {
  width: 54px;
}

.w-58 {
  width: 58px;
}

.w-64 {
  width: 64px;
}

.w-68 {
  width: 68px;
}

.w-70 {
  width: 70px;
}

.w-80 {
  width: 80px;
}

.w-86 {
  width: 86px;
}

.w-90 {
  width: 90px;
}

.checks {
  display: grid;
  grid-template-columns: 80px 1fr;
  grid-template-rows: 39px 39px;
  padding: 4px 0 0 14px;
}

.check {
  display: flex;
  align-items: center;
  gap: 7px;
  height: 39px;
  white-space: nowrap;
}

.check span,
.small span {
  padding-bottom: 2px;
}

.check input {
  display: grid;
  place-items: center;
  width: 16px;
  height: 16px;
  margin: 0;
  border: 1px solid #666;
  background: #fff;
  appearance: none;
}

.check input:checked::after {
  content: "";
  width: 5px;
  height: 10px;
  margin-bottom: 3px;
  border: solid #333;
  border-width: 0 1px 1px 0;
  transform: rotate(40deg);
}

.check.is-disabled {
  color: #b1b1b1;
}

.check.is-disabled input {
  border-color: #ababab;
  background: #e6e6e6;
}

.check.is-disabled input::after {
  border-color: #a6a6a6;
}

.stack {
  display: flex;
  flex-direction: column;
  height: 87px;
}

.stack--first {
  width: 119px;
}

.stack--second {
  position: relative;
  width: 168px;
}

.stack--second::before,
.stack--second::after {
  content: "";
  position: absolute;
  top: 9px;
  bottom: 9px;
  left: 0;
  width: 1px;
  background: #d0d0d0;
}

.stack--second::after {
  right: 0;
  left: auto;
}

.stack--second .small {
  padding-left: 9px;
}

.small {
  display: flex;
  align-items: center;
  gap: 5px;
  height: 29px;
  white-space: nowrap;
}

.small svg {
  width: 20px;
  height: 20px;
}

.small:disabled {
  color: #b1b1b1;
}

.ribbon__collapse {
  align-self: flex-end;
  margin: 0 10px 0 auto;
}

.ribbon__collapse svg {
  width: 14px;
  height: 8px;
}

/* quick access */
.quick {
  display: flex;
  align-items: center;
  flex: none;
  height: 51px;
  padding: 0 0 12px 9px;
}

.quick__redo svg {
  width: 20px;
  height: 18px;
}

.quick__more {
  margin: 0 5px 0 7px;
}

.quick__more svg {
  width: 8px;
  height: 6px;
}

.quick__btn {
  display: grid;
  place-items: center;
  width: 35px;
  height: 35px;
}

.quick__btn.is-on {
  background: #c6c6c6;
}

.quick__btn svg {
  width: 20px;
  height: 20px;
}

/* formula bar */
.formula {
  display: flex;
  flex: none;
  height: 35px;
  margin: 0 6px 12px;
}

.formula input {
  flex: 1;
  min-width: 0;
  padding: 0;
  border: none;
  outline: none;
  background: none;
  color: #444;
  font: inherit;
  font-size: 19px;
}

.formula__name,
.formula__tools,
.formula__text {
  display: flex;
  align-items: center;
  border: 1px solid #c6c6c6;
  background: #fff;
}

.formula__name {
  width: 127px;
  padding: 0 7px;
}

.formula__name svg {
  width: 8px;
  height: 6px;
}

.formula .dots {
  margin: 0 17px;
}

.dots {
  align-self: center;
  width: 3px;
  height: 13px;
  background: repeating-linear-gradient(#a6a6a6 0 3px, transparent 3px 5px);
}

.formula__tools {
  width: 137px;
  margin-right: 3px;
}

.formula__tools button {
  display: grid;
  place-items: center;
  width: 45px;
}

.formula__tools svg {
  width: 20px;
  height: 20px;
}

.formula .formula__fx {
  color: #555;
  font-family: "Liberation Serif", serif;
  font-size: 23px;
  font-style: italic;
}

.formula__fx sub {
  font-size: 16px;
  line-height: 0;
  vertical-align: baseline;
}

.formula__text {
  flex: 1;
  padding: 0 5px 0 13px;
}

.formula__text input {
  padding-bottom: 3px;
}

.formula__text svg {
  width: 10px;
  height: 8px;
}

/* grid */
.work {
  display: flex;
  flex: 1;
  min-height: 0;
  padding-right: 4px;
}

.sheet {
  position: relative;
  flex: 1;
  min-width: 0;
  overflow: hidden;
  border-right: 1px solid #8c8c8c;
  background: linear-gradient(#e6e6e6 0 14px, #8c8c8c 14px 15px, #a0a0a0 15px);
}

.grid {
  width: 1878px;
  border-spacing: 0;
  table-layout: fixed;
  color: #000;
  font-size: 11px;
  line-height: 15px;
}

.grid__rowcol {
  width: 23px;
}

.grid__col {
  width: 53px;
}

.grid th,
.grid td {
  padding: 0;
  border: solid transparent;
  border-width: 0 1px 1px 0;
}

.grid th {
  border-color: #ababab;
  background: #e6e6e6;
  color: #222;
  font-weight: 400;
  text-align: center;
}

.grid thead th {
  height: 15px;
  border-bottom-color: #999;
  font-size: 12px;
  line-height: 14px;
}

.grid .corner {
  background: linear-gradient(135deg, transparent 50%, #b5b5b5 50%) 12px 4px / 8px 8px no-repeat #e6e6e6;
}

.grid th.is-current {
  background: #d2d2d2;
  color: #217346;
}

.grid td {
  background: #fff;
  border-color: #d0d0d0;
  text-align: right;
}

.grid td > div {
  height: 16px;
  padding: 0 2px 0 3px;
  overflow: hidden;
  line-height: 14px;
  white-space: nowrap;
}

.grid td.out {
  border-color: transparent;
  background: none;
}

.grid td.ko,
.grid td.lot {
  text-align: left;
}

.grid td.lot > div {
  padding-left: 2px;
}

.grid td.ko > div {
  padding-right: 0;
  font-size: 12px;
}

.grid td.dong > div {
  padding-left: 7px;
}

.grid td.is-flagged {
  background: linear-gradient(135deg, #107c10 3px, transparent 3px) no-repeat;
}

.grid .fields td {
  border-color: #000;
  font-size: 12px;
  font-weight: 700;
}

.grid .fields td > div {
  display: flex;
  justify-content: center;
  padding: 0;
}

.grid .fields td > div > span {
  flex: none;
}

.grid .fields .is-selected {
  position: relative;
}

.grid .fields .is-selected::before {
  content: "";
  position: absolute;
  z-index: 3;
  inset: -2px -1px -1px -2px;
  border: 2px solid #217346;
}

.grid .fields .is-selected::after {
  content: "";
  position: absolute;
  z-index: 3;
  right: -2px;
  bottom: -2px;
  width: 6px;
  height: 6px;
  border: solid #fff;
  border-width: 1px 0 0 1px;
  background: #217346;
}

/* print area outline, page break and page number */
.area {
  position: absolute;
  top: 15px;
  bottom: 0;
  left: 23px;
  width: 478px;
  border: solid #0a0aa0;
  border-width: 1px 3px 0 1px;
}

.break {
  position: absolute;
  top: 574px;
  left: 24px;
  width: 474px;
  height: 2px;
  background: repeating-linear-gradient(90deg, #0a0aa0 0 9px, #fff 9px 13px);
}

.mark {
  position: absolute;
  top: 263px;
  left: 190px;
  color: #a0a0a0;
  font-size: 39px;
  line-height: 48px;
  mix-blend-mode: multiply;
}

.cursor {
  position: absolute;
  top: 585px;
  left: 515px;
  width: 20px;
  height: 20px;
}

/* scroll bars */
.vbar {
  display: flex;
  flex-direction: column;
  width: 18px;
  margin: 2px 0 0 3px;
}

.vbar button,
.hbar button {
  display: grid;
  flex: none;
  place-items: center;
  width: 18px;
  height: 19px;
  border: 1px solid #777;
  background: #fff;
}

.vbar svg {
  width: 10px;
  height: 8px;
}

.vbar__thumb {
  flex: 282;
  border: 1px solid #777;
  background: #fff;
}

.vbar__track {
  flex: 406;
  background: #dadada;
}

.sheets {
  display: flex;
  flex: none;
  height: 30px;
  padding-right: 25px;
  border-bottom: 1px solid #c6c6c6;
  box-shadow: inset 0 1px #a0a0a0;
}

.sheets__tabs {
  display: flex;
  flex: 1;
  align-items: center;
  padding-left: 28px;
}

.sheets__nav {
  width: 6px;
  margin-right: 22px;
}

.sheets__nav svg {
  width: 6px;
  height: 10px;
}

.sheets__tab {
  align-self: flex-start;
  width: 74px;
  height: 26px;
  margin: 0 32px 0 19px;
  padding-bottom: 3px;
  border: solid #ababab;
  border-width: 0 1px;
  background: #fff;
  box-shadow: inset 0 -2px #217346;
  color: #217346;
}

.sheets__add svg {
  width: 22px;
  height: 22px;
}

.hbar {
  display: flex;
  flex: none;
  width: calc(38% + 8px);
  height: 19px;
  margin: 5px 0 0 15px;
}

.hbar svg {
  width: 8px;
  height: 10px;
}

.hbar__thumb {
  flex: 671;
  border: 1px solid #777;
  background: #fff;
}

.hbar__track {
  flex: 20;
  background: #dadada;
}

/* status bar */
.status {
  display: flex;
  align-items: center;
  flex: none;
  height: 27px;
  border-bottom: 2px solid #434043;
  background: #f3f3f3;
  color: #444;
}

.status__ready {
  margin: 0 24px 0 10px;
}

.status__access {
  display: flex;
  align-items: center;
  gap: 2px;
}

.status__access svg {
  width: 20px;
  height: 18px;
}

.status__right {
  display: flex;
  align-items: center;
  margin-left: auto;
  padding-right: 9px;
}

.status__mode {
  display: grid;
  place-items: center;
  width: 49px;
  height: 25px;
}

.status__mode.is-on {
  background: #c6c6c6;
}

.status__mode svg {
  width: 18px;
  height: 18px;
}

.status__step {
  width: 10px;
  margin: 0 7px;
}

.status__step svg {
  width: 10px;
  height: 10px;
}

.status input {
  width: 125px;
  height: 14px;
  margin: 0;
  background:
    linear-gradient(#333, #333) 62px 2px / 1px 10px no-repeat,
    linear-gradient(#333, #333) 0 7px / 100% 1px no-repeat;
  appearance: none;
}

.status input::-webkit-slider-thumb {
  width: 6px;
  height: 14px;
  background: #666;
  appearance: none;
}

.status__zoom {
  width: 39px;
  text-align: right;
}
</style>
